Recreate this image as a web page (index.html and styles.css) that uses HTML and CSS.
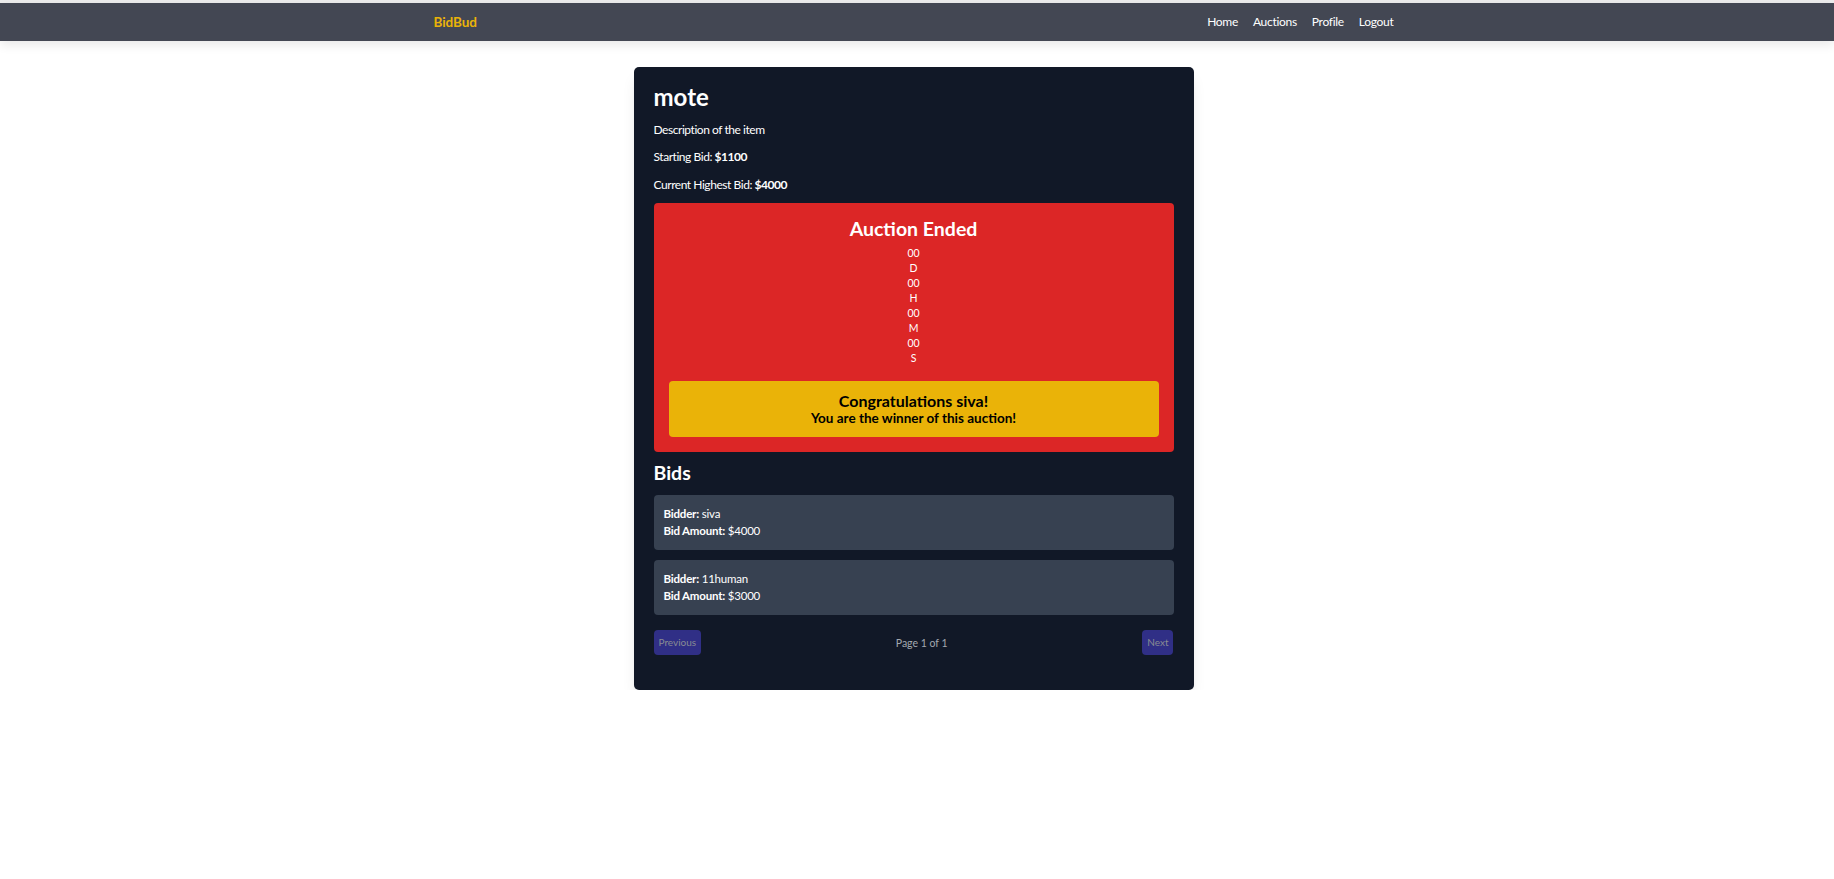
FILE: index.html
```html
<!DOCTYPE html>
<html lang="en">
<head>
<meta charset="utf-8">
<title>BidBud</title>
<link rel="stylesheet" href="styles.css">
</head>
<body>
<div class="topline"></div>
<nav class="navbar">
  <div class="nav-inner">
    <a class="brand" href="#">BidBud</a>
    <div class="nav-links">
      <a href="#">Home</a>
      <a href="#">Auctions</a>
      <a href="#">Profile</a>
      <a href="#">Logout</a>
    </div>
  </div>
</nav>
<main class="main">
  <section class="card">
    <h1 class="title">mote</h1>
    <p class="info">Description of the item</p>
    <p class="info">Starting Bid: <strong>$1100</strong></p>
    <p class="info">Current Highest Bid: <strong>$4000</strong></p>

    <div class="ended">
      <h2 class="ended-title">Auction Ended</h2>
      <div class="countdown">
        <div>00</div>
        <div>D</div>
        <div>00</div>
        <div>H</div>
        <div>00</div>
        <div>M</div>
        <div>00</div>
        <div>S</div>
      </div>
      <div class="winner">
        <div class="winner-title">Congratulations siva!</div>
        <div class="winner-sub">You are the winner of this auction!</div>
      </div>
    </div>

    <h3 class="bids-title">Bids</h3>
    <div class="bid-list">
      <div class="bid">
        <div><strong>Bidder:</strong> siva</div>
        <div><strong>Bid Amount:</strong> $4000</div>
      </div>
      <div class="bid">
        <div><strong>Bidder:</strong> 11human</div>
        <div><strong>Bid Amount:</strong> $3000</div>
      </div>
    </div>

    <div class="pagination">
      <button class="page-btn" disabled>Previous</button>
      <span class="page-info">Page 1 of 1</span>
      <button class="page-btn" disabled>Next</button>
    </div>
  </section>
</main>
</body>
</html>
```

FILE: styles.css
```css
* {
  box-sizing: border-box;
}

body {
  margin: 0;
  background: #ffffff;
  font-family: Lato, "Liberation Sans", sans-serif;
  color: #ffffff;
}

.topline {
  height: 3px;
  background: #ececec;
}

.navbar {
  height: 38px;
  background: #434753;
  padding-right: 7px;
  box-shadow: 0 4px 10px rgba(0, 0, 0, 0.09);
  position: relative;
}

.nav-inner {
  max-width: 960px;
  height: 100%;
  margin: 0 auto;
  display: flex;
  align-items: center;
  justify-content: space-between;
}

.brand {
  color: #eab308;
  font-weight: 700;
  font-size: 13.5px;
  letter-spacing: -0.1px;
  text-decoration: none;
}

.nav-links {
  display: flex;
  gap: 15px;
  padding-bottom: 2px;
}

.nav-links a {
  color: #ffffff;
  text-decoration: none;
  font-size: 12px;
  letter-spacing: -0.3px;
}

.main {
  padding: 26px 7px 0 0;
  display: flex;
  justify-content: center;
}

.card {
  width: 560px;
  background: #111827;
  border-radius: 5px;
  padding: 16px 20px 20px;
  box-shadow: 0 10px 15px -3px rgba(0, 0, 0, 0.1), 0 4px 6px -4px rgba(0, 0, 0, 0.1);
}

.title {
  margin: 0 0 10px;
  font-size: 24px;
  line-height: 28px;
  font-weight: 700;
}

.info {
  margin: 0 0 9.3px;
  font-size: 12px;
  line-height: 18px;
  letter-spacing: -0.45px;
}

.info strong {
  font-weight: 700;
}

.ended {
  margin-top: 1px;
  background: #dc2626;
  border-radius: 4px;
  padding: 14px 15px 15px;
  text-align: center;
}

.ended-title {
  margin: 0 0 5px;
  font-size: 19.5px;
  line-height: 24px;
  font-weight: 700;
}

.countdown {
  font-size: 10.5px;
  line-height: 15px;
  margin-bottom: 15px;
}

.winner {
  background: #eab308;
  color: #000000;
  border-radius: 4px;
  padding: 11px 10px 10.5px;
}

.winner-title {
  font-size: 16px;
  line-height: 18px;
  font-weight: 700;
}

.winner-sub {
  font-size: 13.5px;
  line-height: 17px;
  font-weight: 700;
}

.bids-title {
  margin: 9px 0 10px;
  font-size: 19.5px;
  line-height: 24px;
  font-weight: 700;
}

.bid-list {
  display: flex;
  flex-direction: column;
  gap: 10px;
}

.bid {
  background: #374151;
  border-radius: 4px;
  padding: 10px 10px 11px;
  font-size: 11.5px;
  line-height: 17px;
  letter-spacing: -0.2px;
}

.bid strong {
  font-weight: 700;
}

.pagination {
  margin: 15px 0 15px;
  display: flex;
  align-items: center;
  justify-content: space-between;
}

.page-btn {
  font-family: inherit;
  font-size: 10px;
  line-height: 15px;
  padding: 5px;
  border: 0;
  border-radius: 4px;
  background: #302f86;
  color: #888b93;
}

.page-info {
  font-size: 10.5px;
  color: #a3a8b0;
}
```
